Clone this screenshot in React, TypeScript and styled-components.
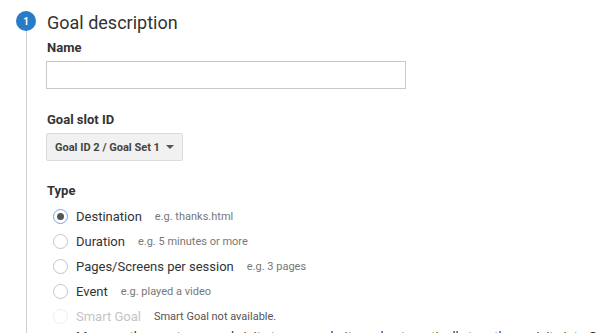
import styled, { createGlobalStyle } from 'styled-components';

const Global = createGlobalStyle`
  html, body { margin: 0; padding: 0; background: #fff; }
  body { font-family: Roboto, "Liberation Sans", Arial, sans-serif; color: #333; }
`

const Page = styled.div`
  height: 333px;
  overflow: hidden;
`
const Step = styled.section`
  display: flex;
  padding-left: 16px;
  padding-top: 11px;
  height: 322px;
`
const Rail = styled.div`
  display: flex;
  flex-direction: column;
  align-items: center;
  width: 20px;
  margin-right: 10px;
`
const Badge = styled.div`
  width: 20px;
  height: 20px;
  border-radius: 50%;
  background: #2a7bc7;
  color: #fff;
  font-size: 10px;
  font-weight: 700;
  display: flex;
  align-items: center;
  justify-content: center;
`
const Line = styled.div`
  flex: 1;
  width: 1px;
  background: #cfcfcf;
`
const Body = styled.div`
  flex: 1;
  min-width: 0;
`
const Title = styled.h2`
  margin: 2px 0 0;
  font-size: 18px;
  font-weight: 400;
  color: #333;
  line-height: 20px;
  padding-left: 1px;
`
const Label = styled.div<{ $top: number }>`
  margin-top: ${p => p.$top}px;
  font-size: 13px;
  font-weight: 700;
  color: #333;
  line-height: 16px;
  padding-left: 1px;
`
const TextInput = styled.input`
  display: block;
  box-sizing: border-box;
  margin-top: 5px;
  width: 360px;
  height: 28px;
  border: 1px solid #c8c8c8;
  background: #fff;
  outline: none;
`
const Select = styled.button`
  display: flex;
  align-items: center;
  gap: 6px;
  box-sizing: border-box;
  margin-top: 5px;
  height: 28px;
  padding: 0 8px 0 8px;
  border: 1px solid #dcdcdc;
  border-radius: 2px;
  background: #f1f1f1;
  font-family: inherit;
  font-size: 11px;
  font-weight: 700;
  color: #444;
`
const Caret = styled.span`
  width: 0;
  height: 0;
  border-left: 4px solid transparent;
  border-right: 4px solid transparent;
  border-top: 4px solid #555;
`
const Options = styled.div`
  margin-top: 5px;
  padding-left: 7px;
  display: flex;
  flex-direction: column;
`
const Option = styled.label<{ $disabled?: boolean }>`
  display: flex;
  align-items: center;
  height: 25px;
  font-size: 13px;
  color: ${p => (p.$disabled ? '#c4c4c4' : '#333')};
`
const Radio = styled.span<{ $checked?: boolean; $disabled?: boolean }>`
  box-sizing: border-box;
  width: 15px;
  height: 15px;
  border-radius: 50%;
  border: 1px solid ${p => (p.$checked ? '#7aa6e6' : p.$disabled ? '#eeeeee' : '#c4c4c4')};
  margin-right: 8px;
  display: flex;
  align-items: center;
  justify-content: center;
  &::after {
    content: '';
    width: 7px;
    height: 7px;
    border-radius: 50%;
    background: ${p => (p.$checked ? '#555' : 'transparent')};
  }
`
const Hint = styled.span<{ $dark?: boolean }>`
  margin-left: 13px;
  font-size: 11px;
  color: ${p => (p.$dark ? '#555' : '#777')};
`
const Note = styled.div`
  padding-left: 30px;
  font-size: 13px;
  color: #333;
  white-space: nowrap;
  line-height: 14px;
  margin-top: 1px;
`

const types = [
  { name: 'Destination', hint: 'e.g. thanks.html', checked: true },
  { name: 'Duration', hint: 'e.g. 5 minutes or more' },
  { name: 'Pages/Screens per session', hint: 'e.g. 3 pages' },
  { name: 'Event', hint: 'e.g. played a video' },
]

export default function App() {
  return (
    <Page>
      <Global />
      <Step>
        <Rail>
          <Badge>1</Badge>
          <Line />
        </Rail>
        <Body>
          <Title>Goal description</Title>
          <Label $top={7}>Name</Label>
          <TextInput />
          <Label $top={23}>Goal slot ID</Label>
          <Select>
            Goal ID 2 / Goal Set 1
            <Caret />
          </Select>
          <Label $top={22}>Type</Label>
          <Options>
            {types.map(t => (
              <Option key={t.name}>
                <Radio $checked={t.checked} />
                {t.name}
                <Hint>{t.hint}</Hint>
              </Option>
            ))}
            <Option $disabled>
              <Radio $disabled />
              Smart Goal
              <Hint $dark>Smart Goal not available.</Hint>
            </Option>
          </Options>
          <Note>
            Measure the most engaged visits to your website and automatically turn those visits into Goals. Then use those Goals
          </Note>
        </Body>
      </Step>
    </Page>
  )
}
